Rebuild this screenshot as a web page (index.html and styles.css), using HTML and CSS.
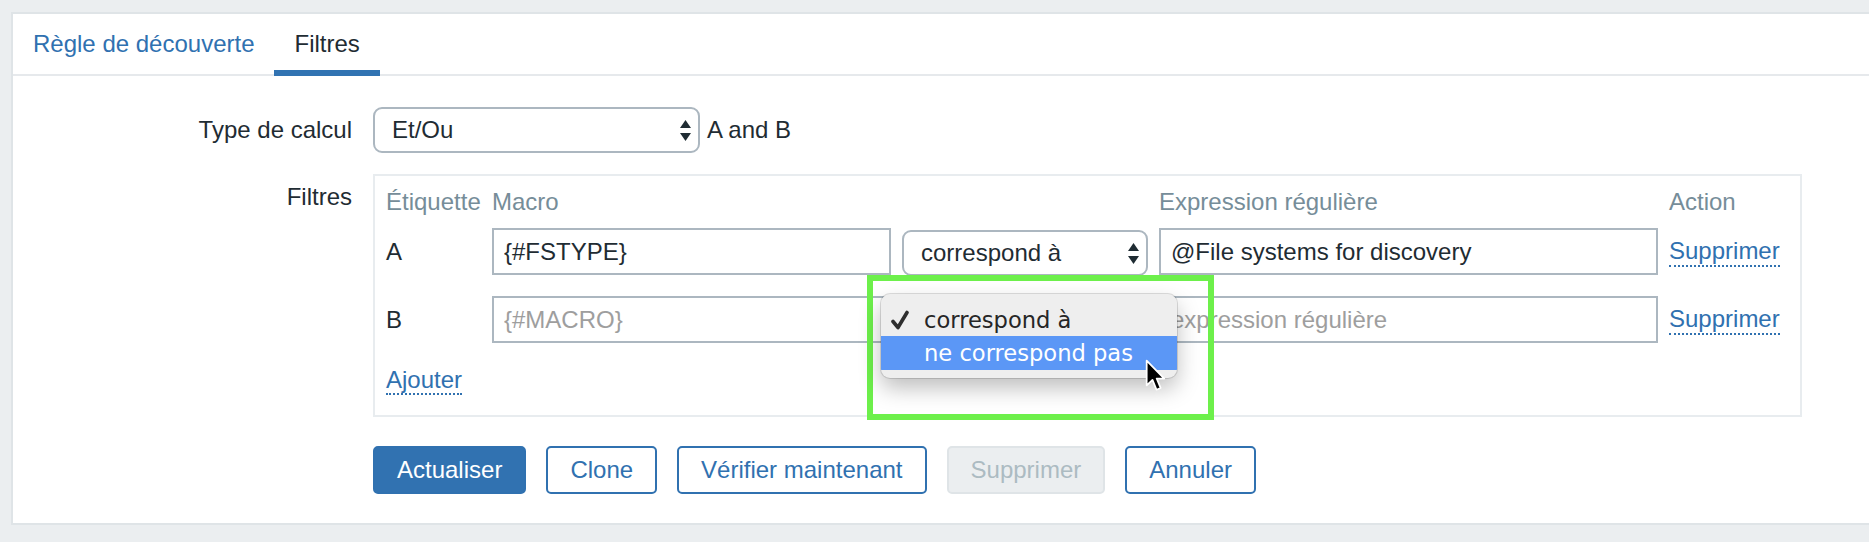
FILE: index.html
```html
<!DOCTYPE html>
<html lang="fr">
<head>
<meta charset="utf-8">
<title>Filtres</title>
<link rel="stylesheet" href="styles.css">
</head>
<body>
<div class="panel">
  <div class="tabs">
    <a class="tab" href="#">Règle de découverte</a>
    <a class="tab active" href="#">Filtres</a>
  </div>
  <div class="form">
    <div class="row row-calc">
      <div class="label">Type de calcul</div>
      <div class="inline">
        <div class="select calc"><span>Et/Ou</span>
          <svg class="arrows" width="11" height="21" viewBox="0 0 11 21"><path d="M5.5 0 L11 8 L0 8 Z M0 13 L11 13 L5.5 21 Z" fill="#1f2c33"/></svg>
        </div>
        <span class="formula">A and B</span>
      </div>
    </div>
    <div class="row row-filters">
      <div class="label">Filtres</div>
      <div class="filter-box">
        <div class="frow head">
          <div>Étiquette</div>
          <div>Macro</div>
          <div></div>
          <div>Expression régulière</div>
          <div>Action</div>
        </div>
        <div class="frow data">
          <div class="tag">A</div>
          <input class="input" type="text" value="{#FSTYPE}">
          <div class="select-cell">
            <div class="select op"><span>correspond à</span>
              <svg class="arrows" width="11" height="21" viewBox="0 0 11 21"><path d="M5.5 0 L11 8 L0 8 Z M0 13 L11 13 L5.5 21 Z" fill="#1f2c33"/></svg>
            </div>
            <div class="highlight-box"></div>
            <div class="menu">
              <div class="mi">
                <svg class="check" width="18" height="20" viewBox="0 0 18 20"><path d="M2 11.5 L7 17.5 L16 2.5" fill="none" stroke="#2e2e2e" stroke-width="3.6" stroke-linecap="round" stroke-linejoin="round"/></svg>
                correspond à
              </div>
              <div class="mi hl">ne correspond pas</div>
            </div>
            <svg class="cursor" width="22" height="34" viewBox="0 0 20 31"><path d="M1.5 1.5 L1.5 24 L6.8 19 L10.5 28 L14.2 26.4 L10.6 17.8 L17.5 17.8 Z" fill="#000" stroke="#fff" stroke-width="1.6" stroke-linejoin="round"/></svg>
          </div>
          <input class="input" type="text" value="@File systems for discovery">
          <div class="act"><a class="dotted" href="#">Supprimer</a></div>
        </div>
        <div class="frow data">
          <div class="tag">B</div>
          <input class="input" type="text" placeholder="{#MACRO}">
          <div class="select op covered"><span>correspond à</span>
            <svg class="arrows" width="11" height="21" viewBox="0 0 11 21"><path d="M5.5 0 L11 8 L0 8 Z M0 13 L11 13 L5.5 21 Z" fill="#1f2c33"/></svg>
          </div>
          <input class="input" type="text" placeholder="expression régulière">
          <div class="act"><a class="dotted" href="#">Supprimer</a></div>
        </div>
        <div class="add-row"><a class="dotted" href="#">Ajouter</a></div>
      </div>
    </div>
    <div class="row row-buttons">
      <div></div>
      <div class="btns">
        <button class="btn primary">Actualiser</button>
        <button class="btn">Clone</button>
        <button class="btn">Vérifier maintenant</button>
        <button class="btn disabled">Supprimer</button>
        <button class="btn">Annuler</button>
      </div>
    </div>
  </div>
</div>
</body>
</html>
```

FILE: styles.css
```css
html, body {
  margin: 0;
  padding: 0;
}
body {
  background: #ebeef0;
  font-family: "Liberation Sans", Arial, sans-serif;
  font-size: 24px;
  color: #1f2c33;
  height: 542px;
  overflow: hidden;
}
.panel {
  margin: 12px 0 0 11px;
  background: #fff;
  border: 2px solid #dfe4e7;
  border-right: 0;
  padding-bottom: 29px;
}
.tabs {
  display: flex;
  align-items: flex-start;
  height: 60px;
  border-bottom: 2px solid #e6e9ec;
}
.tab {
  display: block;
  height: 60px;
  padding: 0 20px;
  line-height: 60px;
  color: #3071b0;
  text-decoration: none;
}
.tab.active {
  color: #1f2c33;
  box-shadow: inset 0 -4px 0 #3173b2;
  border-bottom: 2px solid #3173b2;
}
.form {
  padding-top: 31px;
}
.row {
  display: grid;
  grid-template-columns: 339px auto;
  column-gap: 21px;
}
.label {
  text-align: right;
  line-height: 46px;
}
.row-calc {
  height: 46px;
  margin-bottom: 21px;
}
.inline {
  display: flex;
  align-items: center;
  gap: 7px;
}
.select {
  box-sizing: border-box;
  height: 46px;
  border: 2px solid #acb7c0;
  border-radius: 9px;
  padding: 0 7px 0 17px;
  display: flex;
  align-items: center;
  justify-content: space-between;
  background: #fff;
}
.select.calc {
  width: 327px;
}
.select.op {
  margin-top: 2px;
}
.select.covered {
  visibility: hidden;
}
.arrows {
  display: block;
}
.filter-box {
  box-sizing: border-box;
  width: 1429px;
  border: 2px solid #e8ecef;
  padding: 10px 11px 19px 11px;
}
.frow {
  display: grid;
  grid-template-columns: 95px 399px 246px 499px auto;
  column-gap: 11px;
}
.frow.head {
  height: 32px;
  line-height: 32px;
  margin-bottom: 10px;
  color: #768d99;
  white-space: nowrap;
}
.frow.data {
  height: 47px;
  margin-bottom: 21px;
  align-items: center;
}
.frow.data > * {
  align-self: stretch;
}
.tag, .act {
  display: flex;
  align-items: center;
}
.input {
  box-sizing: border-box;
  width: 100%;
  height: 47px;
  margin: 0;
  border: 2px solid #acb7c0;
  border-radius: 0;
  padding: 0 10px;
  font: inherit;
  color: #1f2c33;
  background: #fff;
  outline: none;
}
.input::placeholder {
  color: #9e9e9e;
  opacity: 1;
}
.dotted {
  color: #3071b0;
  text-decoration: none;
  border-bottom: 2px dotted #3071b0;
}
.add-row {
  height: 32px;
  line-height: 32px;
}
.row-buttons {
  margin-top: 29px;
}
.btns {
  display: flex;
  gap: 20px;
}
.btn {
  box-sizing: border-box;
  height: 48px;
  padding: 0 22px;
  border: 2px solid #3071b0;
  border-radius: 5px;
  background: #fff;
  color: #3071b0;
  font: inherit;
  line-height: 44px;
  cursor: pointer;
}
.btn.primary {
  background: #3172b1;
  color: #fff;
}
.btn.disabled {
  background: #ebeef0;
  border-color: #dfe4e7;
  color: #acbbc2;
}

/* overlays: open dropdown of the first condition select */
.select-cell {
  position: relative;
}
.highlight-box {
  position: absolute;
  z-index: 20;
  left: -35px;
  top: 47px;
  width: 347px;
  height: 145px;
  box-sizing: border-box;
  border: 6px solid #6df04b;
}
.menu {
  position: absolute;
  z-index: 21;
  left: -21px;
  top: 66px;
  width: 296px;
  height: 84px;
  box-sizing: border-box;
  padding: 9px 0 8px;
  background: #eeeeee;
  border-radius: 9px;
  box-shadow: 0 0 0 1px rgba(0, 0, 0, 0.13), 0 10px 22px rgba(0, 0, 0, 0.26);
  font-family: "DejaVu Sans", "Liberation Sans", sans-serif;
  font-size: 22.6px;
  color: #262626;
  overflow: hidden;
}
.mi {
  position: relative;
  height: 33px;
  display: flex;
  align-items: center;
  padding-left: 43px;
  white-space: nowrap;
}
.mi.hl {
  height: 34px;
  background: #5b97f6;
  color: #fff;
}
.check {
  position: absolute;
  left: 10px;
  top: 7px;
}
.cursor {
  position: absolute;
  z-index: 22;
  left: 243px;
  top: 131px;
}
```
